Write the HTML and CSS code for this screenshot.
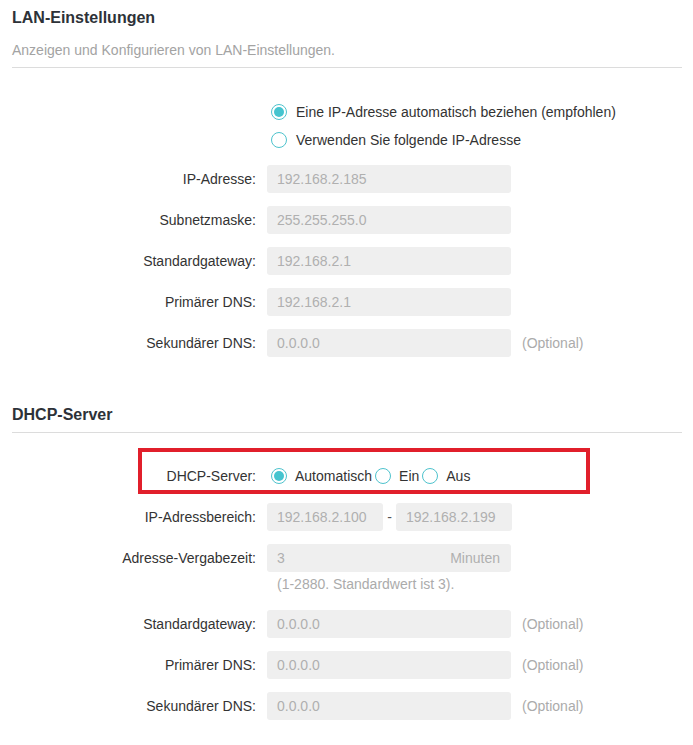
FILE: index.html
```html
<!DOCTYPE html>
<html lang="de">
<head>
<meta charset="utf-8">
<title>LAN-Einstellungen</title>
<link rel="stylesheet" href="styles.css">
</head>
<body>
<div class="page">
  <section class="section">
    <h2 class="title">LAN-Einstellungen</h2>
    <p class="subtitle">Anzeigen und Konfigurieren von LAN-Einstellungen.</p>
    <div class="options">
      <div class="opt-row"><span class="radio checked"></span><span class="opt-text">Eine IP-Adresse automatisch beziehen (empfohlen)</span></div>
      <div class="opt-row"><span class="radio"></span><span class="opt-text">Verwenden Sie folgende IP-Adresse</span></div>
    </div>
    <div class="row first"><span class="label">IP-Adresse:</span><div class="field">192.168.2.185</div></div>
    <div class="row"><span class="label">Subnetzmaske:</span><div class="field">255.255.255.0</div></div>
    <div class="row"><span class="label">Standardgateway:</span><div class="field">192.168.2.1</div></div>
    <div class="row"><span class="label">Primärer DNS:</span><div class="field">192.168.2.1</div></div>
    <div class="row"><span class="label">Sekundärer DNS:</span><div class="field">0.0.0.0</div><span class="note">(Optional)</span></div>
  </section>

  <section class="section">
    <h2 class="title second">DHCP-Server</h2>
    <div class="row dhcp">
      <span class="label">DHCP-Server:</span>
      <div class="choices">
        <span class="radio checked"></span><span class="choice-text">Automatisch</span>
        <span class="radio"></span><span class="choice-text">Ein</span>
        <span class="radio"></span><span class="choice-text">Aus</span>
      </div>
      <div class="highlight"></div>
    </div>
    <div class="row"><span class="label">IP-Adressbereich:</span><div class="field short">192.168.2.100</div><span class="dash">-</span><div class="field short">192.168.2.199</div></div>
    <div class="row"><span class="label">Adresse-Vergabezeit:</span><div class="field unit"><span>3</span><span>Minuten</span></div></div>
    <div class="hint">(1-2880. Standardwert ist 3).</div>
    <div class="row after-hint"><span class="label">Standardgateway:</span><div class="field">0.0.0.0</div><span class="note">(Optional)</span></div>
    <div class="row"><span class="label">Primärer DNS:</span><div class="field">0.0.0.0</div><span class="note">(Optional)</span></div>
    <div class="row"><span class="label">Sekundärer DNS:</span><div class="field">0.0.0.0</div><span class="note">(Optional)</span></div>
  </section>
</div>
</body>
</html>
```

FILE: styles.css
```css
* { box-sizing: border-box; }
body {
  margin: 0;
  background: #fff;
  font-family: "Liberation Sans", Arial, sans-serif;
  font-size: 14px;
  color: #333;
}
.page {
  padding: 0 11px 0 12px;
}
.title {
  margin: 8px 0 0;
  font-size: 16px;
  line-height: 20px;
  font-weight: bold;
  color: #2d3238;
}
.title.second {
  margin-top: 48px;
  padding-bottom: 7px;
  border-bottom: 1px solid #dcdcdc;
}
.subtitle {
  margin: 13px 0 0;
  font-size: 14px;
  line-height: 18px;
  color: #a3a3a3;
  padding-bottom: 8px;
  border-bottom: 1px solid #dcdcdc;
}
.options {
  margin-top: 30px;
  padding-left: 259px;
}
.opt-row {
  display: flex;
  align-items: center;
  height: 28px;
}
.opt-text {
  margin-left: 9px;
  color: #333;
}
.radio {
  position: relative;
  flex: none;
  width: 16px;
  height: 16px;
  border: 1px solid #4ec3cd;
  border-radius: 50%;
  background: #fff;
}
.radio.checked::after {
  content: "";
  position: absolute;
  left: 2px;
  top: 2px;
  width: 10px;
  height: 10px;
  border-radius: 50%;
  background: #45c4cf;
}
.row {
  display: flex;
  align-items: center;
  height: 28px;
  margin-top: 13px;
}
.row.first { margin-top: 11px; }
.row.dhcp {
  position: relative;
  margin-top: 29px;
}
.label {
  flex: none;
  width: 244px;
  margin-right: 11px;
  text-align: right;
  color: #333;
}
.field {
  flex: none;
  width: 244px;
  height: 28px;
  line-height: 28px;
  padding: 0 11px 0 10px;
  background: #efefef;
  border-radius: 3px;
  color: #b0b0b0;
}
.field.short { width: 116px; }
.field.unit {
  display: flex;
  justify-content: space-between;
}
.dash {
  width: 13px;
  text-align: center;
  color: #555;
}
.note {
  margin-left: 11px;
  color: #ababab;
}
.choices {
  display: flex;
  align-items: center;
  padding-left: 4px;
}
.choice-text {
  margin: 0 3px 0 8px;
  color: #333;
}
.highlight {
  position: absolute;
  left: 126px;
  top: -14px;
  width: 452px;
  height: 46px;
  border: 4px solid #e11f2b;
  pointer-events: none;
}
.hint {
  padding: 3px 0 4px 265px;
  line-height: 18px;
  color: #ababab;
}
.row.after-hint { margin-top: 13px; }
```
